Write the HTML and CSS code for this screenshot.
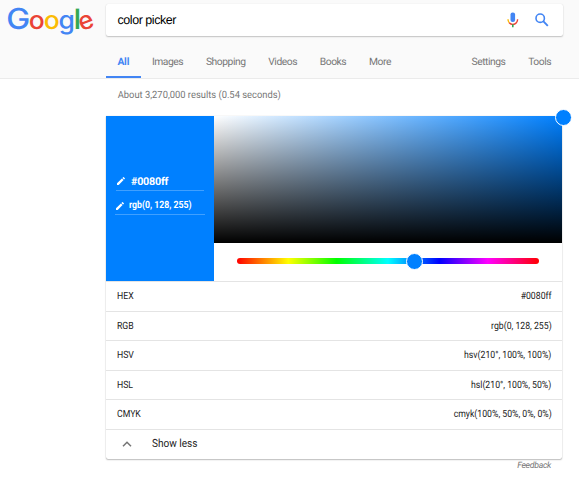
FILE: index.html
```
<!DOCTYPE html>
<html lang="en">
<head>
<meta charset="utf-8">
<title>color picker - Google Search</title>
<link rel="stylesheet" href="styles.css">
</head>
<body>
<header class="header">
  <div class="top">
    <svg class="logo" width="98" height="40" viewBox="0 0 98 40" role="img" aria-label="Google">
      <g class="logo-text">
        <text class="blue" x="6.3" y="29" font-size="29" textLength="24" lengthAdjust="spacingAndGlyphs">G</text>
        <text class="red" x="28.8" y="29" font-size="25.5" textLength="16" lengthAdjust="spacingAndGlyphs">o</text>
        <text class="yellow" x="43.8" y="29" font-size="25.5" textLength="16" lengthAdjust="spacingAndGlyphs">o</text>
        <text class="blue" x="58.6" y="29" font-size="25.5" textLength="16.4" lengthAdjust="spacingAndGlyphs">g</text>
        <text class="green" x="73.6" y="29" font-size="28" textLength="7.8" lengthAdjust="spacingAndGlyphs">l</text>
        <text class="red" x="78.7" y="29" font-size="25.5" textLength="15" lengthAdjust="spacingAndGlyphs" transform="rotate(-20 86.5 22.2)">e</text>
      </g>
    </svg>
    <div class="search">
      <span class="query">color picker</span>
      <svg class="mic" width="12" height="16" viewBox="0 0 12 16">
        <rect x="3.5" y="0.5" width="4.6" height="9.6" rx="2.1" fill="#4285f4"/>
        <path d="M1 7.3C1 9 1.5 10 2.3 10.9" fill="none" stroke="#fbbc05" stroke-width="1.4"/>
        <path d="M2.2 10.8C4.3 13 7.4 13 9.4 10.8C10.2 9.9 10.6 8.8 10.6 7.3" fill="none" stroke="#ea4335" stroke-width="1.4"/>
        <path d="M5.8 12.3V15.2" stroke="#34a853" stroke-width="1.6"/>
      </svg>
      <svg class="lens" width="14" height="14" viewBox="0 0 14 14" fill="none" stroke="#4285f4">
        <circle cx="5.2" cy="5.2" r="4.2" stroke-width="1.6"/>
        <path d="M8.2 8.2L12.8 12.8" stroke-width="1.9"/>
      </svg>
    </div>
  </div>
  <nav class="tabs">
    <a class="tab active">All</a><a class="tab">Images</a><a class="tab">Shopping</a><a class="tab">Videos</a><a class="tab">Books</a><a class="tab">More</a>
    <a class="tab settings">Settings</a><a class="tab">Tools</a>
  </nav>
</header>
<main class="main">
  <p class="stats">About 3,270,000 results (0.54 seconds)</p>
  <section class="card">
    <div class="picker">
      <div class="swatch">
        <div class="field hex">
          <svg width="8" height="8" viewBox="3 3 18 18" fill="#fff"><path d="M3 17.25V21h3.75L17.8 9.94l-3.75-3.75L3 17.25zM20.7 7.04a1 1 0 0 0 0-1.41L18.37 3.3a1 1 0 0 0-1.41 0l-1.83 1.83 3.75 3.75 1.82-1.84z"/></svg>
          <span>#0080ff</span>
        </div>
        <div class="field rgb">
          <svg width="8" height="8" viewBox="3 3 18 18" fill="#fff"><path d="M3 17.25V21h3.75L17.8 9.94l-3.75-3.75L3 17.25zM20.7 7.04a1 1 0 0 0 0-1.41L18.37 3.3a1 1 0 0 0-1.41 0l-1.83 1.83 3.75 3.75 1.82-1.84z"/></svg>
          <span>rgb(0, 128, 255)</span>
        </div>
      </div>
      <div class="controls">
        <div class="shade"><i class="knob shade-knob"></i></div>
        <div class="hue"><i class="knob hue-knob"></i></div>
      </div>
    </div>
    <div class="row"><span>HEX</span><span>#0080ff</span></div>
    <div class="row"><span>RGB</span><span>rgb(0, 128, 255)</span></div>
    <div class="row"><span>HSV</span><span>hsv(210°, 100%, 100%)</span></div>
    <div class="row"><span>HSL</span><span>hsl(210°, 100%, 50%)</span></div>
    <div class="row"><span>CMYK</span><span>cmyk(100%, 50%, 0%, 0%)</span></div>
    <div class="row less">
      <svg width="10" height="6" viewBox="0 0 10 6" fill="none" stroke="#757575" stroke-width="1.5"><path d="M1 5.2L5 1.2L9 5.2"/></svg>
      <span>Show less</span>
    </div>
  </section>
  <p class="feedback">Feedback</p>
</main>
</body>
</html>
```
FILE: styles.css
```
* { box-sizing: border-box; }
body {
  margin: 0;
  height: 480px;
  overflow: hidden;
  background: #fff;
  font-family: Roboto, "Liberation Sans", sans-serif;
  color: #222;
  text-rendering: geometricPrecision;
}
p { margin: 0; }
svg { display: block; flex: none; }

.header {
  height: 79px;
  background: #fafafa;
  border-bottom: 1px solid #ebebeb;
}
.top { display: flex; height: 45px; }
.logo { margin-right: 8px; }
.logo-text { font-family: Inter, Roboto, sans-serif; font-weight: 500; }
.blue { fill: #4285f4; }
.red { fill: #ea4335; }
.yellow { fill: #fbbc05; }
.green { fill: #34a853; }

.search {
  display: flex;
  align-items: center;
  width: 456.5px;
  height: 32px;
  margin-top: 4px;
  padding: 0 13.5px 0 11.5px;
  background: #fff;
  border-radius: 2px;
  box-shadow: 0 1px 1.5px rgba(0, 0, 0, .22), 0 0 1px rgba(0, 0, 0, .13);
}
.query {
  flex: 1;
  color: #000;
  font: 12.5px/32px "Liberation Sans", sans-serif;
  letter-spacing: -.45px;
}
.mic { margin-right: 16px; }

.tabs {
  display: flex;
  height: 33px;
  margin-left: 106px;
  width: 456.5px;
}
.tab {
  padding: 0 11.4px;
  color: #777;
  font-size: 10.3px;
  letter-spacing: -.46px;
  line-height: 34.5px;
}
.active {
  color: #4285f4;
  font-weight: 700;
  border-bottom: 2px solid #4285f4;
  letter-spacing: -.2px;
}
.settings { margin-left: auto; }

.main { width: 456px; margin-left: 106px; }
.stats {
  height: 37px;
  padding-left: 12.5px;
  color: #777;
  font-size: 10px;
  line-height: 33px;
  transform: scaleX(.937);
  transform-origin: 0 0;
}
.card {
  height: 342.5px;
  border-radius: 0 0 2px 2px;
  box-shadow: 0 1px 1.5px rgba(0, 0, 0, .25), 0 0 1px rgba(0, 0, 0, .25);
}
.picker { display: flex; height: 165px; }
.swatch {
  width: 108px;
  padding-top: 56px;
  background: #0080ff;
}
.field {
  display: flex;
  align-items: center;
  color: #fff;
  font-weight: 700;
  border-bottom: 1px solid rgba(255, 255, 255, .25);
}
.hex {
  height: 19px;
  width: 88px;
  margin-left: 10px;
  padding-left: 1px;
  gap: 6px;
  font-size: 10.8px;
  letter-spacing: -.25px;
}
.rgb {
  height: 20px;
  width: 90px;
  margin: 4px 0 0 9px;
  padding: 2px 0 0 1px;
  gap: 5px;
  font-size: 10px;
}
.rgb span { transform: scaleX(.87); transform-origin: 0 50%; white-space: nowrap; }
.controls { width: 348px; }
.shade {
  position: relative;
  height: 127px;
  background: linear-gradient(to top, #000, transparent), linear-gradient(to right, #fff, #0080ff);
}
.hue {
  position: relative;
  width: 302px;
  height: 6px;
  margin: 15px 0 0 23px;
  border-radius: 3px;
  background: linear-gradient(to right, #f00, #ff0 17%, #0f0 33%, #0ff 50%, #00f 67%, #f0f 83%, #f00);
}
.knob {
  position: absolute;
  width: 17px;
  height: 17px;
  background: #0080ff;
  border: 1px solid #fff;
  border-radius: 50%;
}
.shade-knob { top: -7px; right: -10px; }
.hue-knob { top: -5px; left: 169px; }

.row {
  display: flex;
  justify-content: space-between;
  height: 29.5px;
  padding: 0 10.5px 0 11px;
  border-top: 1px solid #e4e4e4;
  font-size: 10px;
  line-height: 29.5px;
}
.row span { transform: scaleX(.87); transform-origin: 0 50%; }
.row span + span { transform-origin: 100% 50%; }
.less {
  justify-content: flex-start;
  align-items: center;
  padding-left: 15.5px;
  gap: 20.5px;
  font-size: 11.3px;
}
.less span { transform: scaleX(.89); }
.feedback {
  padding: 0 11px;
  text-align: right;
  color: #777;
  font-size: 8.7px;
  letter-spacing: -.3px;
  font-style: italic;
  line-height: 15px;
}
```
